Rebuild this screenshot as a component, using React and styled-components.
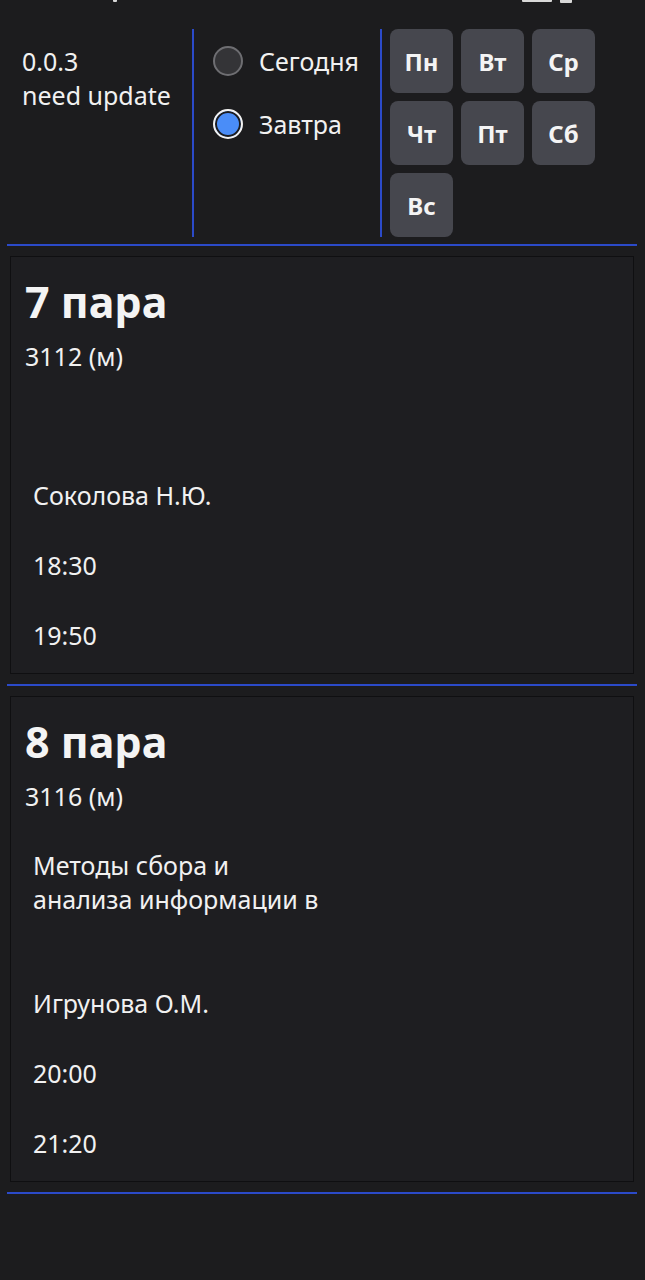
import React from "react";
import styled, { createGlobalStyle } from "styled-components";

const GlobalStyle = createGlobalStyle`
  html, body {
    margin: 0;
    padding: 0;
    background: #1c1c1e;
  }
  body {
    font-family: "Noto Sans", "Open Sans", sans-serif;
    color: #f1f1f1;
  }
  * { box-sizing: border-box; }
`;

const Page = styled.div`
  min-height: 1280px;
  padding: 0 8px 0 7px;
  background: #1c1c1e;
`;

const StatusBar = styled.div`
  height: 29px;
  display: flex;
  align-items: flex-start;
`;

const StatusMark = styled.span`
  display: block;
  width: ${(p) => p.$w}px;
  height: ${(p) => p.$h}px;
  margin-left: ${(p) => p.$ml}px;
  background: #d8d8d8;
  border-radius: 0 0 1px 1px;
`;

const Header = styled.div`
  display: grid;
  grid-template-columns: 185px 2px 186px 2px 1fr;
  height: 208px;
`;

const VLine = styled.div`
  background: #2b4ac9;
  width: 2px;
`;

const VersionBox = styled.div`
  padding: 15px 0 0 15px;
  font-size: 25px;
  line-height: 34px;
`;

const RadioList = styled.div`
  display: flex;
  flex-direction: column;
  gap: 29px;
  padding: 15px 0 0 19px;
`;

const RadioRow = styled.label`
  display: flex;
  align-items: center;
  gap: 16px;
  height: 34px;
  font-size: 25px;
  line-height: 34px;
  cursor: pointer;
`;

const RadioCircle = styled.span`
  width: 30px;
  height: 30px;
  border-radius: 50%;
  flex: none;
  border: 2px solid ${(p) => (p.$checked ? "#f2f2f2" : "#6e6e72")};
  background: ${(p) => (p.$checked ? "#4a8df8" : "#343437")};
  box-shadow: ${(p) => (p.$checked ? "inset 0 0 0 2px #1c1c1e" : "none")};
`;

const DayGrid = styled.div`
  display: grid;
  grid-template-columns: repeat(3, 63px);
  grid-auto-rows: 64px;
  column-gap: 8px;
  row-gap: 8px;
  padding-left: 8px;
  align-content: start;
`;

const DayButton = styled.button`
  border: none;
  border-radius: 8px;
  background: #46474e;
  color: #f4f4f4;
  font-family: "Noto Sans", "Open Sans", sans-serif;
  font-weight: 700;
  font-size: 24px;
  padding: 0;
  display: flex;
  align-items: center;
  justify-content: center;
`;

const HRule = styled.div`
  height: 2px;
  background: #2b4ac9;
  margin: ${(p) => p.$mt}px 0 ${(p) => p.$mb}px;
`;

const Card = styled.div`
  margin: 0 3px;
  border: 1px solid #0f0f11;
  background: #1e1e21;
  padding: 21px 14px 21px;
`;

const Title = styled.h2`
  margin: 0;
  font-size: 43px;
  line-height: 48px;
  font-weight: 700;
  color: #f4f4f4;
`;

const Room = styled.div`
  margin-top: 13px;
  font-size: 25px;
  line-height: 34px;
`;

const Details = styled.div`
  padding-left: 8px;
  display: flex;
  flex-direction: column;
  gap: 36px;
`;

const Subject = styled.div`
  margin-top: 35px;
  margin-bottom: 34px;
  font-size: 25px;
  line-height: 34px;
`;

const Line = styled.div`
  font-size: 25px;
  line-height: 34px;
`;

const lessons = [
  {
    num: 7,
    room: "3112 (м)",
    subject: [],
    teacher: "Соколова Н.Ю.",
    start: "18:30",
    end: "19:50",
  },
  {
    num: 8,
    room: "3116 (м)",
    subject: ["Методы сбора и", "анализа информации в"],
    teacher: "Игрунова О.М.",
    start: "20:00",
    end: "21:20",
  },
];

const days = ["Пн", "Вт", "Ср", "Чт", "Пт", "Сб", "Вс"];

export default function App() {
  return (
    <>
      <GlobalStyle />
      <Page>
        <StatusBar>
          <StatusMark $w={4} $h={2} $ml={106} />
          <StatusMark $w={30} $h={2} $ml={405} />
          <StatusMark $w={12} $h={3} $ml={8} />
        </StatusBar>
        <Header>
          <VersionBox>
            <div>0.0.3</div>
            <div>need update</div>
          </VersionBox>
          <VLine />
          <RadioList>
            <RadioRow>
              <RadioCircle />
              Сегодня
            </RadioRow>
            <RadioRow>
              <RadioCircle $checked />
              Завтра
            </RadioRow>
          </RadioList>
          <VLine />
          <DayGrid>
            {days.map((d) => (
              <DayButton key={d}>{d}</DayButton>
            ))}
          </DayGrid>
        </Header>
        <HRule $mt={7} $mb={10} />
        {lessons.map((l) => (
          <React.Fragment key={l.num}>
            <Card>
              <Title>{l.num} пара</Title>
              <Room>{l.room}</Room>
              <Details>
                <Subject>
                  {l.subject.map((s) => (
                    <div key={s}>{s}</div>
                  ))}
                </Subject>
                <Line>{l.teacher}</Line>
                <Line>{l.start}</Line>
                <Line>{l.end}</Line>
              </Details>
            </Card>
            <HRule $mt={10} $mb={10} />
          </React.Fragment>
        ))}
      </Page>
    </>
  );
}
